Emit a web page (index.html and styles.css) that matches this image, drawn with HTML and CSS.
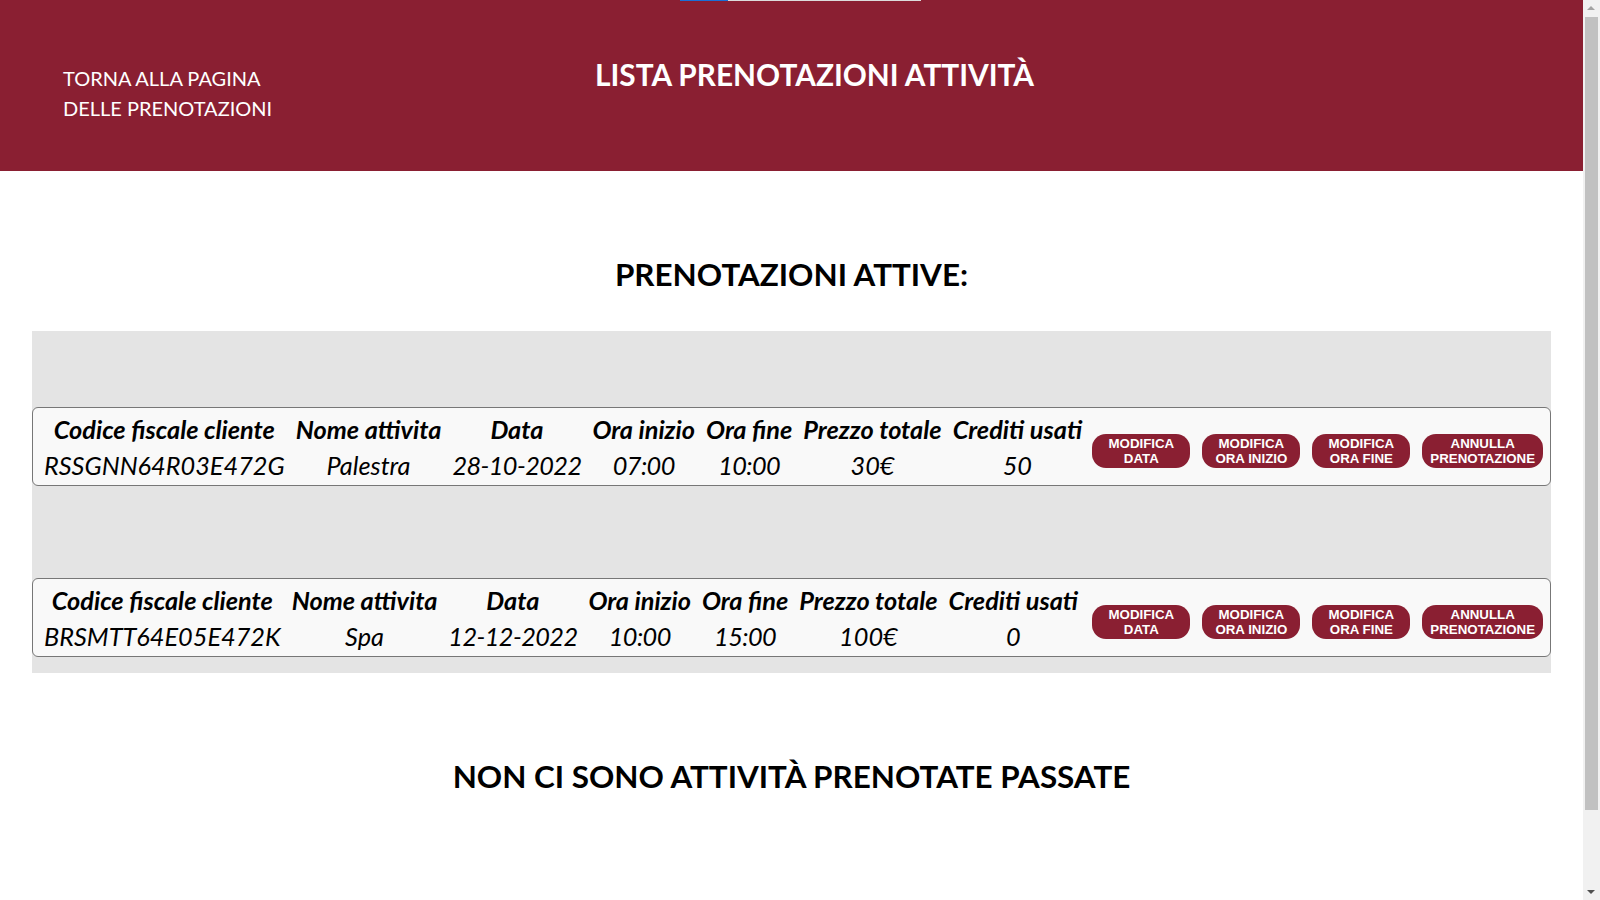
FILE: index.html
```html
<!DOCTYPE html>
<html lang="it">
<head>
<meta charset="utf-8">
<title>Lista prenotazioni attività</title>
<link rel="stylesheet" href="styles.css">
</head>
<body>
<div class="loadbar"><span class="loadbar-fill"></span></div>
<div class="scrollbar" aria-hidden="true">
  <span class="sb-arrow sb-up"></span>
  <span class="sb-thumb"></span>
  <span class="sb-arrow sb-down"></span>
</div>
<header class="topbar">
  <a class="back-link" href="#">TORNA ALLA PAGINA<br>DELLE PRENOTAZIONI</a>
  <h1 class="page-title">LISTA PRENOTAZIONI ATTIVITÀ</h1>
</header>
<main class="content">
  <h2 class="section-title">PRENOTAZIONI ATTIVE:</h2>
  <div class="panel">
    <div class="item">
      <div class="card">
        <table class="info">
          <tr><th>Codice fiscale cliente</th><th>Nome attivita</th><th>Data</th><th>Ora inizio</th><th>Ora fine</th><th>Prezzo totale</th><th>Crediti usati</th></tr>
          <tr><td>RSSGNN64R03E472G</td><td>Palestra</td><td class="num">28-10-2022</td><td class="num">07:00</td><td class="num">10:00</td><td>30€</td><td>50</td></tr>
        </table>
        <div class="actions">
          <button class="btn">MODIFICA<br>DATA</button>
          <button class="btn">MODIFICA<br>ORA INIZIO</button>
          <button class="btn">MODIFICA<br>ORA FINE</button>
          <button class="btn">ANNULLA<br>PRENOTAZIONE</button>
        </div>
      </div>
    </div>
    <div class="item">
      <div class="card">
        <table class="info">
          <tr><th>Codice fiscale cliente</th><th>Nome attivita</th><th>Data</th><th>Ora inizio</th><th>Ora fine</th><th>Prezzo totale</th><th>Crediti usati</th></tr>
          <tr><td>BRSMTT64E05E472K</td><td>Spa</td><td class="num">12-12-2022</td><td class="num">10:00</td><td class="num">15:00</td><td>100€</td><td>0</td></tr>
        </table>
        <div class="actions">
          <button class="btn">MODIFICA<br>DATA</button>
          <button class="btn">MODIFICA<br>ORA INIZIO</button>
          <button class="btn">MODIFICA<br>ORA FINE</button>
          <button class="btn">ANNULLA<br>PRENOTAZIONE</button>
        </div>
      </div>
    </div>
  </div>
  <h2 class="section-title past">NON CI SONO ATTIVITÀ PRENOTATE PASSATE</h2>
</main>
</body>
</html>
```
FILE: styles.css
```css
html, body {
  margin: 0;
  padding: 0;
}
body {
  margin-right: 17px;
  font-family: Lato, "Open Sans", sans-serif;
  color: #000;
  background: #fff;
}
.loadbar {
  position: absolute;
  top: 0;
  left: 680px;
  width: 241px;
  height: 1px;
  background: #dcdcdc;
  z-index: 2;
}
.loadbar-fill {
  display: block;
  width: 48px;
  height: 1px;
  background: #1a6fd6;
}
.scrollbar {
  position: fixed;
  top: 0;
  right: 0;
  width: 17px;
  height: 100vh;
  background: #f1f1f1;
  z-index: 5;
}
.sb-thumb {
  position: absolute;
  top: 17px;
  left: 2px;
  width: 13px;
  height: 793px;
  background: #c1c1c1;
}
.sb-arrow {
  position: absolute;
  left: 4px;
  width: 0;
  height: 0;
  border-left: 4px solid transparent;
  border-right: 4px solid transparent;
}
.sb-up {
  top: 6px;
  border-bottom: 4px solid #a3a3a3;
}
.sb-down {
  bottom: 6px;
  border-top: 4px solid #505050;
}
.topbar {
  box-sizing: border-box;
  height: 171px;
  background: #8a1f32;
  display: flex;
  align-items: baseline;
  padding: 57px 0 0 63px;
}
.back-link {
  color: #fff;
  text-decoration: none;
  font-size: 20px;
  line-height: 30px;
  width: 215px;
}
.page-title {
  margin: 0 0 0 317px;
  color: #fff;
  font-size: 29.8px;
  font-weight: 700;
  line-height: normal;
}
.content {
  padding: 0 32px 186px;
}
.section-title {
  margin: 84px 0 38px;
  text-align: center;
  font-size: 31.4px;
  font-weight: 700;
  line-height: normal;
}
.section-title.past {
  margin: 84px 0 0;
}
.panel {
  background: #e4e4e4;
}
.item {
  padding: 76px 0 16px;
}
.card {
  display: flex;
  align-items: center;
  background: #f9f9f9;
  border: 1px solid #777;
  border-radius: 6px;
  padding: 3px 7px 2px 5px;
}
.info {
  border-collapse: separate;
  border-spacing: 1px 0;
  font-style: italic;
  font-size: 25.3px;
}
.info th,
.info td {
  padding: 0 5px;
  line-height: 36px;
  text-align: center;
  white-space: nowrap;
}
.info th {
  font-weight: 700;
}
.info td {
  font-weight: 400;
}
.info td.num {
  letter-spacing: -0.6px;
}
.actions {
  display: flex;
  gap: 12px;
  margin-left: auto;
  margin-top: 8px;
}
.btn {
  min-width: 98px;
  padding: 2px 8px;
  border: 0;
  border-radius: 14px;
  background: #8a1f32;
  color: #fff;
  font-family: "Liberation Sans", Arial, sans-serif;
  font-weight: 700;
  font-size: 13.3px;
  line-height: 15px;
  text-align: center;
  cursor: pointer;
}
```
